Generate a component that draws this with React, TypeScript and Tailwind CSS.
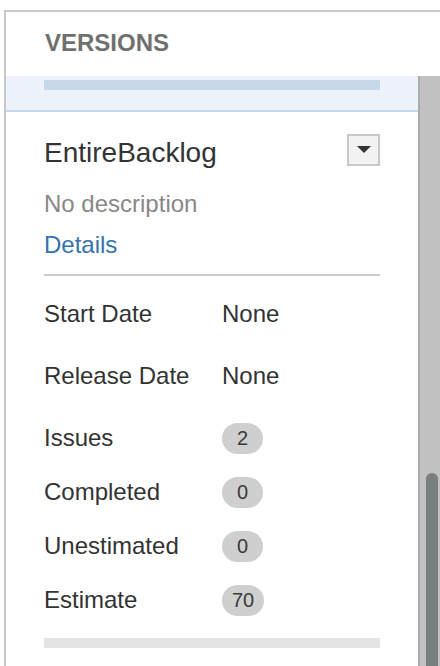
import React from "react"

type Row = { label: string; value: string; badge?: boolean }

const dateRows: Row[] = [
  { label: "Start Date", value: "None" },
  { label: "Release Date", value: "None" },
]

const countRows: Row[] = [
  { label: "Issues", value: "2", badge: true },
  { label: "Completed", value: "0", badge: true },
  { label: "Unestimated", value: "0", badge: true },
  { label: "Estimate", value: "70", badge: true },
]

function Badge({ children }: { children: React.ReactNode }) {
  return (
    <span className="inline-flex h-[31px] min-w-[41px] items-center justify-center rounded-full bg-[#cfcfcf] px-[10px] text-[20px] leading-none text-[#3a3a3a]">
      {children}
    </span>
  )
}

function DetailRow({ row, tall }: { row: Row; tall?: boolean }) {
  return (
    <div className={tall ? "flex h-[62px] items-center" : "flex h-[54px] items-center"}>
      <span className="w-[178px] shrink-0 text-[24px] text-[#333]">{row.label}</span>
      {row.badge ? <Badge>{row.value}</Badge> : <span className="text-[24px] text-[#333]">{row.value}</span>}
    </div>
  )
}

export default function App() {
  return (
    <div
      className="h-[666px] w-[440px] overflow-hidden bg-white pl-[4px] pt-[10px]"
      style={{ fontFamily: '"Liberation Sans", Arial, sans-serif' }}
    >
      <div className="flex h-full flex-col border-l-2 border-t-2 border-[#c8c8c8]">
        {/* header */}
        <div className="flex h-[64px] shrink-0 items-center pb-[3px] pl-[39px]">
          <h2 className="text-[24px] font-bold text-[#707070]">VERSIONS</h2>
        </div>

        {/* scroll area */}
        <div className="flex min-h-0 flex-1">
          <div className="flex-1">
            <div className="h-[36px] border-b-2 border-[#c6d8ec] bg-[#ebf2fa] px-[38px] pt-[4px]">
              <div className="h-[10px] bg-[#c6d8ea]" />
            </div>

            <div className="px-[38px] pt-[22px]">
              <div className="flex h-[32px] items-start justify-between">
                <span className="pt-[3px] text-[28px] leading-[32px] text-[#333]">EntireBacklog</span>
                <button
                  type="button"
                  className="flex h-[32px] w-[33px] items-center justify-center border-2 border-[#c8c8c8] bg-[#f2f2f2]"
                  aria-label="Version actions"
                >
                  <svg width="14" height="8" viewBox="0 0 14 8">
                    <polygon points="0,0 14,0 7,7" fill="#333" />
                  </svg>
                </button>
              </div>

              <p className="mt-[23px] text-[24px] leading-[30px] text-[#888]">No description</p>
              <a className="mt-[11px] block text-[24px] leading-[30px] text-[#3572b0]" href="#">
                Details
              </a>

              <div className="mt-[14px] h-[2px] bg-[#cccccc]" />

              <div className="mt-[7px]">
                {dateRows.map((r) => (
                  <DetailRow key={r.label} row={r} tall />
                ))}
              </div>
              <div className="mt-[4px]">
                {countRows.map((r) => (
                  <DetailRow key={r.label} row={r} />
                ))}
              </div>

              <div className="mt-[11px] h-[10px] bg-[#e4e4e4]" />
            </div>
          </div>

          {/* scrollbar */}
          <div className="flex w-[22px] shrink-0 flex-col border-l-2 border-[#ababab] bg-[#c1c1c1] pl-[6px] pr-[2px] pt-[397px]">
            <div className="flex-1 rounded-t-[6px] bg-[#797e7e]" />
          </div>
        </div>
      </div>
    </div>
  )
}
